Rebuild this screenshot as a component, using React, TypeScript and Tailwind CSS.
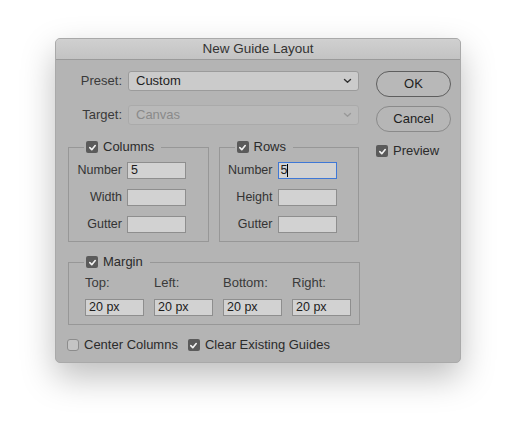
import React from "react"

const font = { fontFamily: '"Liberation Sans", Arial, sans-serif' }

function Check({ checked = true }: { checked?: boolean }) {
  if (!checked) {
    return (
      <span className="w-[12px] h-[12px] rounded-[3px] border border-[#8c8c8c] bg-[#c4c4c4] shrink-0" />
    )
  }
  return (
    <span className="w-[12px] h-[12px] rounded-[2px] bg-[#5b5b5b] flex items-center justify-center shrink-0">
      <svg width="9" height="9" viewBox="0 0 10 10">
        <polyline points="2,5.2 4.2,7.4 8,2.8" fill="none" stroke="#f2f2f2" strokeWidth="1.8" strokeLinecap="round" strokeLinejoin="round" />
      </svg>
    </span>
  )
}

function Chevron({ color }: { color: string }) {
  return (
    <svg width="9" height="6" viewBox="0 0 9 6">
      <polyline points="1.5,1.5 4.5,4.3 7.5,1.5" fill="none" stroke={color} strokeWidth="1.4" strokeLinecap="round" strokeLinejoin="round" />
    </svg>
  )
}

function Field({ value = "", focused = false }: { value?: string; focused?: boolean }) {
  return (
    <div
      className={
        focused
          ? "w-[59px] h-[17px] bg-[#d2d2d2] border-[1.5px] border-[#3f78d6] flex items-center pl-[2px] text-[12.5px] leading-[15px] text-[#1c1c1c]"
          : "w-[59px] h-[17px] bg-[#d2d2d2] border border-[#8e8e8e] flex items-center pl-[3px] text-[12.5px] leading-[15px] text-[#1c1c1c]"
      }
    >
      {value}
      {focused && <span className="w-px h-[13px] bg-black" />}
    </div>
  )
}

function GroupRow({ label, value, focused }: { label: string; value?: string; focused?: boolean }) {
  return (
    <div className="flex items-center gap-[5px] h-[17px] leading-[17px]">
      <span className="w-[49px] text-right text-[#333]">{label}</span>
      <Field value={value} focused={focused} />
    </div>
  )
}

function Legend({ title, offset }: { title: string; offset: string }) {
  return (
    <legend className={`${offset} px-[2px] flex items-center gap-[5px] text-[#2b2b2b] text-[13px] leading-[16px]`}>
      <Check />
      <span className="pr-[5px]">{title}</span>
    </legend>
  )
}

function Group({ title, rows }: { title: string; rows: { label: string; value?: string; focused?: boolean }[] }) {
  return (
    <fieldset className="w-[141px] border border-[#979797] pl-[4px] pt-[7px] pb-[8px] flex flex-col gap-[10px]">
      <Legend title={title} offset="ml-[11px]" />
      {rows.map((r, i) => (
        <GroupRow key={i} label={r.label} value={r.value} focused={r.focused} />
      ))}
    </fieldset>
  )
}

export default function App() {
  const margins = ["Top:", "Left:", "Bottom:", "Right:"]
  return (
    <div className="w-[517px] h-[438px] bg-white pt-[38px] pl-[55px]" style={font}>
      <div className="w-[406px] h-[325px] rounded-[5px] overflow-hidden bg-[#b4b4b4] border border-[#a9a9a9] shadow-[0_14px_34px_rgba(0,0,0,0.26)] flex flex-col text-[12.5px] text-[#2b2b2b]">
        {/* Title bar */}
        <div className="h-[21px] shrink-0 bg-gradient-to-b from-[#d0d0d0] to-[#c3c3c3] border-b border-[#9a9a9a] flex items-center justify-center text-[13.5px] text-[#333]">
          New Guide Layout
        </div>

        <div className="flex pt-[11px] pl-[12px] pr-[10px]">
          {/* Left column */}
          <div className="w-[291px] flex flex-col">
            <div className="flex items-center gap-[6px]">
              <span className="w-[54px] text-right text-[#3a3a3a] text-[13px]">Preset:</span>
              <div className="w-[231px] h-[20px] bg-[#cbcbcb] border border-[#9b9b9b] rounded-[3px] flex items-center justify-between pl-[7px] pr-[6px] text-[13px] text-[#1e1e1e]">
                <span>Custom</span>
                <Chevron color="#333" />
              </div>
            </div>
            <div className="flex items-center gap-[6px] mt-[14px]">
              <span className="w-[54px] text-right text-[#3a3a3a] text-[13px]">Target:</span>
              <div className="w-[231px] h-[20px] bg-[#b9b9b9] border border-[#aaaaaa] rounded-[3px] flex items-center justify-between pl-[7px] pr-[6px] text-[13px] text-[#8a8a8a]">
                <span>Canvas</span>
                <Chevron color="#999" />
              </div>
            </div>

            <div className="flex gap-[10px] mt-[14px]">
              <Group
                title="Columns"
                rows={[{ label: "Number", value: "5" }, { label: "Width" }, { label: "Gutter" }]}
              />
              <Group
                title="Rows"
                rows={[{ label: "Number", value: "5", focused: true }, { label: "Height" }, { label: "Gutter" }]}
              />
            </div>

            <fieldset className="w-[292px] border border-[#979797] mt-[12px] pl-[16px] pt-[5px] pb-[8px]">
              <Legend title="Margin" offset="-ml-[1px]" />
              <div className="flex gap-[10px]">
                {margins.map((m) => (
                  <div key={m} className="flex flex-col gap-[8px]">
                    <span className="text-[#3a3a3a] text-[13px] leading-[16px]">{m}</span>
                    <Field value="20 px" />
                  </div>
                ))}
              </div>
            </fieldset>

            <div className="flex items-center mt-[12px] -ml-[1px] text-[13px] leading-[16px] text-[#2b2b2b]">
              <Check checked={false} />
              <span className="ml-[5px]">Center Columns</span>
              <span className="ml-[10px]"><Check /></span>
              <span className="ml-[5px]">Clear Existing Guides</span>
            </div>
          </div>

          {/* Right column */}
          <div className="ml-[17px] flex flex-col">
            <button className="w-[75px] h-[26px] rounded-full border-[1.5px] border-[#5e5e5e] bg-[#b8b8b8] text-[13px] text-[#1e1e1e]">
              OK
            </button>
            <button className="w-[75px] h-[26px] mt-[9px] rounded-full border border-[#8a8a8a] bg-[#b6b6b6] text-[13px] text-[#1e1e1e]">
              Cancel
            </button>
            <div className="flex items-center gap-[5px] mt-[11px] text-[13px] leading-[16px] text-[#2b2b2b]">
              <Check />
              <span>Preview</span>
            </div>
          </div>
        </div>
      </div>
    </div>
  )
}
